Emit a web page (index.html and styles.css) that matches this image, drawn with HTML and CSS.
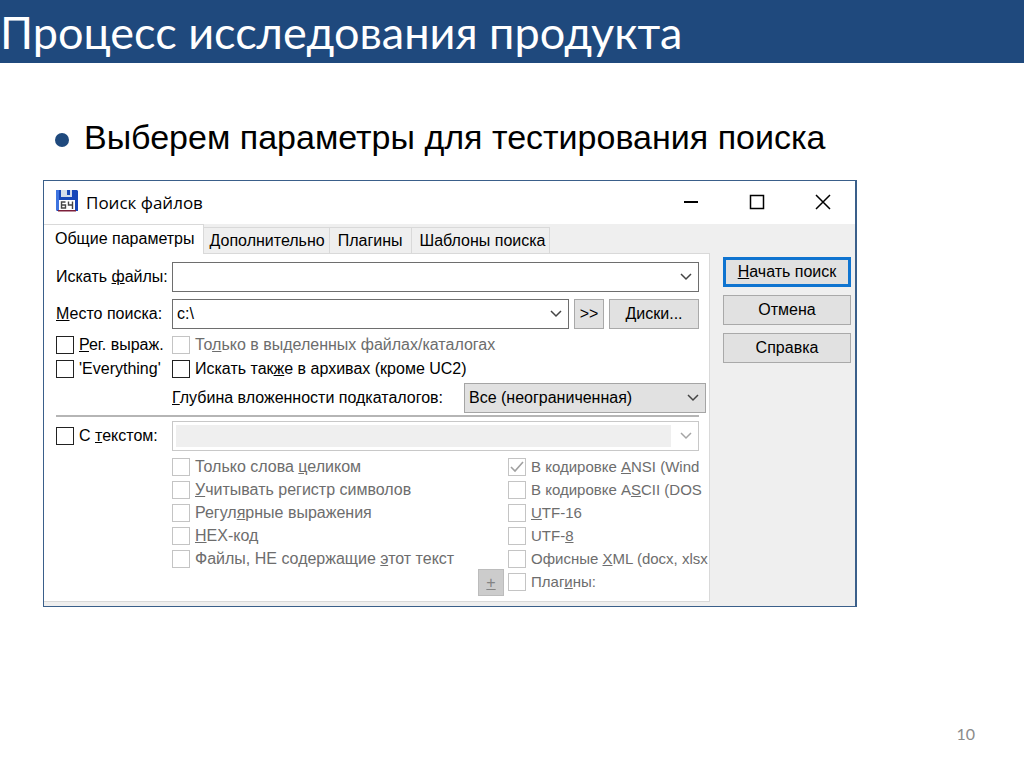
FILE: index.html
```html
<!DOCTYPE html>
<html lang="ru">
<head>
<meta charset="utf-8">
<title>Процесс исследования продукта</title>
<link rel="stylesheet" href="styles.css">
</head>
<body>
<main class="slide">
  <header class="slide-header"><h1>Процесс исследования продукта</h1></header>
  <div class="slide-body">
    <ul class="bullets"><li>Выберем параметры для тестирования поиска</li></ul>

    <section class="window" aria-label="Поиск файлов">
      <div class="titlebar">
        <svg class="app-icon" width="24" height="24" viewBox="0 0 24 24" aria-hidden="true">
          <path fill="#1746b8" d="M1 1h21l1 1v20H2l-1-1z"/>
          <path fill="#3d74e0" d="M1 1h3v20H1z"/>
          <path fill="#d5dcea" d="M6 1h11v7H6z"/>
          <path fill="#1746b8" d="M12 1h3v5h-3z"/>
          <path fill="#fff" d="M4 11h16v10H4z"/>
          <path fill="none" stroke="#444" stroke-width="1.4" d="M10.500 13H6.500v6h4v-3h-4M13.500 12.500V16h4M17.500 12.500V20"/>
          <path fill="#7c1f3a" d="M3 21h18v1.500H3z"/>
        </svg>
        <h2>Поиск файлов</h2>
        <div class="window-controls">
          <button type="button" aria-label="Свернуть"><svg width="16" height="16" viewBox="0 0 16 16"><path d="M1 8h14" stroke-width="2"/></svg></button>
          <button type="button" aria-label="Развернуть"><svg width="16" height="16" viewBox="0 0 16 16"><path d="M1.500 1.500h13v13h-13z" stroke-width="1.500"/></svg></button>
          <button type="button" aria-label="Закрыть"><svg width="16" height="16" viewBox="0 0 16 16"><path d="M1 1l14 14M15 1L1 15" stroke-width="1.500"/></svg></button>
        </div>
      </div>

      <div class="window-body">
        <div class="main">
          <div class="tabs" role="tablist">
            <button type="button" role="tab" class="tab tab-active" aria-selected="true">Общие параметры</button>
            <button type="button" role="tab" class="tab">Дополнительно</button>
            <button type="button" role="tab" class="tab">Плагины</button>
            <button type="button" role="tab" class="tab">Шаблоны поиска</button>
          </div>
          <form class="panel">
            <div class="row">
              <label for="files">Искать <u>ф</u>айлы:</label>
              <div class="combo">
                <select id="files"><option></option></select>
                <svg class="chevron" viewBox="0 0 12 8"><path d="M1 1l5 5 5-5"/></svg>
              </div>
            </div>
            <div class="row">
              <label for="place"><u>М</u>есто поиска:</label>
              <div class="place">
                <div class="combo">
                  <select id="place"><option>c:\</option></select>
                  <svg class="chevron" viewBox="0 0 12 8"><path d="M1 1l5 5 5-5"/></svg>
                </div>
                <button type="button" class="button more">&gt;&gt;</button>
                <button type="button" class="button disks"><u>Д</u>иски...</button>
              </div>
            </div>
            <div class="row options">
              <label class="check"><input type="checkbox"><span><u>Р</u>ег. выраж.</span></label>
              <label class="check disabled"><input type="checkbox" disabled><span>То<u>л</u>ько в выделенных файлах/каталогах</span></label>
              <label class="check"><input type="checkbox"><span>'Everything'</span></label>
              <label class="check"><input type="checkbox"><span>Искать так<u>ж</u>е в архивах (кроме UC2)</span></label>
            </div>
            <div class="depth">
              <label for="depth"><u>Г</u>лубина вложенности подкаталогов:</label>
              <div class="combo combo-grey">
                <select id="depth"><option>Все (неограниченная)</option></select>
                <svg class="chevron" viewBox="0 0 12 8"><path d="M1 1l5 5 5-5"/></svg>
              </div>
            </div>
            <hr>
            <div class="row text-row">
              <label class="check"><input type="checkbox"><span>С <u>т</u>екстом:</span></label>
              <div class="combo combo-off">
                <select aria-label="Текст" disabled><option></option></select>
                <svg class="chevron" viewBox="0 0 12 8"><path d="M1 1l5 5 5-5"/></svg>
              </div>
            </div>
            <div class="text-options">
              <div class="list">
                <label class="check disabled"><input type="checkbox" disabled><span>Только слова <u>ц</u>еликом</span></label>
                <label class="check disabled"><input type="checkbox" disabled><span><u>У</u>читывать регистр символов</span></label>
                <label class="check disabled"><input type="checkbox" disabled><span>Регул<u>я</u>рные выражения</span></label>
                <label class="check disabled"><input type="checkbox" disabled><span><u>H</u>EX-код</span></label>
                <label class="check disabled"><input type="checkbox" disabled><span>Файлы, НЕ содержащие <u>э</u>тот текст</span></label>
              </div>
              <button type="button" class="plus" disabled><u>+</u></button>
              <div class="list encodings">
                <label class="check disabled"><input type="checkbox" checked disabled><span>В кодировке <u>A</u>NSI (Wind</span></label>
                <label class="check disabled"><input type="checkbox" disabled><span>В кодировке A<u>S</u>CII (DOS</span></label>
                <label class="check disabled"><input type="checkbox" disabled><span><u>U</u>TF-16</span></label>
                <label class="check disabled"><input type="checkbox" disabled><span>UTF-<u>8</u></span></label>
                <label class="check disabled"><input type="checkbox" disabled><span>Офисные <u>X</u>ML (docx, xlsx</span></label>
                <label class="check disabled"><input type="checkbox" disabled><span>Плаг<u>и</u>ны:</span></label>
              </div>
            </div>
          </form>
        </div>
        <div class="actions">
          <button type="button" class="button primary"><u>Н</u>ачать поиск</button>
          <button type="button" class="button">Отмена</button>
          <button type="button" class="button">Справка</button>
        </div>
      </div>
    </section>
  </div>
  <footer class="slide-footer">10</footer>
</main>
</body>
</html>
```

FILE: styles.css
```css
* { box-sizing: border-box; }

body {
  margin: 0;
  background: #fff;
  color: #000;
  font-family: "Liberation Sans", Arial, sans-serif;
}

h1, h2, ul { margin: 0; padding: 0; font-weight: 400; }

button, select { font: inherit; color: inherit; }

.slide {
  display: flex;
  flex-direction: column;
  min-height: 100vh;
}

.slide-header {
  background: #1f497d;
  color: #fff;
  height: 63px;
  display: flex;
  align-items: center;
}

.slide-header h1 {
  font: 45px/60px Lato, "Open Sans", sans-serif;
  white-space: nowrap;
}

.slide-body { flex: 1; padding: 54px 167px 0 43px; }

.bullets { list-style: none; }

.bullets li {
  display: flex;
  align-items: center;
  gap: 15px;
  padding-left: 12px;
  font-size: 34px;
  line-height: 40px;
  white-space: nowrap;
}

.bullets li::before {
  content: "";
  width: 14px;
  height: 14px;
  margin-top: 6px;
  border-radius: 50%;
  background: #1f497d;
}

.slide-footer {
  padding: 0 49px 23px;
  text-align: right;
  color: #8b8b8b;
  font: 16px/20px Lato, "Open Sans", sans-serif;
}

/* Window */

.window {
  margin-top: 23px;
  border: 1px solid #3a5f8a;
  border-right-width: 2px;
  background: #efefef;
  font-size: 16px;
  line-height: 18px;
}

.titlebar {
  display: flex;
  align-items: center;
  height: 43px;
  padding: 0 10px 0 11px;
  background: #fff;
}

.app-icon { margin-bottom: 3px; }

.titlebar h2 {
  flex: 1;
  margin-left: 7px;
  font: 17px/24px "Open Sans", sans-serif;
}

.window-controls { display: flex; gap: 22px; padding-bottom: 2px; }

.window-controls button {
  display: grid;
  place-items: center;
  width: 44px;
  height: 30px;
  padding: 0;
  border: 0;
  background: none;
}

.window-controls svg { fill: none; stroke: #000; }

.window-body {
  display: flex;
  gap: 13px;
  padding: 0 4px 4px 0;
}

.main { flex: 1; min-width: 0; }

/* Tabs */

.tabs { display: flex; align-items: flex-end; height: 29px; }

.tab {
  height: 26px;
  padding: 0 4px 0 6px;
  border: 1px solid #d9d9d9;
  border-left: 0;
  border-bottom: 0;
  background: #efefef;
  white-space: nowrap;
}

.tab:nth-child(3) { padding: 0 8px; }
.tab:nth-child(4) { padding: 0 4px 0 8px; }

.tab-active {
  position: relative;
  height: 30px;
  margin-bottom: -1px;
  padding: 0 8px 2px 11px;
  background: #fff;
}

.panel {
  display: flex;
  flex-direction: column;
  border: 1px solid #d9d9d9;
  border-left: 0;
  background: #fff;
  padding: 8px 0 5px 12px;
}

.row {
  display: grid;
  grid-template-columns: 116px 1fr;
  align-items: center;
  margin-right: 10px;
  margin-bottom: 7px;
  white-space: nowrap;
}

.place { display: flex; gap: 5px; }
.place .combo { flex: 1; }

/* Combo boxes */

.combo { display: grid; align-items: center; height: 30px; border: 1px solid #6e6e6e; background: #fff; }

.combo > * { grid-area: 1 / 1; }

.combo select {
  appearance: none;
  width: 100%;
  height: 28px;
  padding: 0 28px 0 4px;
  border: 0;
  background: none;
}

.chevron {
  justify-self: end;
  width: 12px;
  height: 8px;
  margin-right: 6px;
  fill: none;
  stroke: #444;
  stroke-width: 1.5px;
  pointer-events: none;
}

.combo-grey { border-color: #a5a5a5; background: #e1e1e1; }

.combo-off { border-color: #c8c8c8; }
.combo-off select { width: auto; height: 22px; margin: 0 27px 0 3px; background: #efefef; opacity: 1; }
.combo-off .chevron { stroke: #a5a5a5; }

/* Buttons */

.button {
  height: 30px;
  padding: 0;
  border: 1px solid #a9a9a9;
  background: #e1e1e1;
}

.more { width: 30px; }
.disks { width: 90px; }

.actions {
  display: flex;
  flex-direction: column;
  gap: 8px;
  width: 128px;
  padding-top: 33px;
}

.actions .primary { border: 3px solid #0f74d0; }

/* Check boxes */

.check {
  display: flex;
  align-items: center;
  gap: 5px;
  height: 18px;
  white-space: nowrap;
}

.check input {
  appearance: none;
  flex: none;
  width: 18px;
  height: 18px;
  margin: 0;
  border: 1px solid #222;
  background: #fff;
}

.check.disabled { color: #6d6d6d; }
.check.disabled input { border-color: #c4c4c4; }

.check input:checked {
  background: no-repeat center / 16px 16px url("data:image/svg+xml,%3Csvg xmlns='http://www.w3.org/2000/svg' viewBox='0 0 16 16'%3E%3Cpath fill='none' stroke='%23a0a0a0' stroke-width='1.6' d='M2 8l4 4 8-9'/%3E%3C/svg%3E");
}

.options { row-gap: 6px; margin-bottom: 5px; }

.depth {
  display: grid;
  grid-template-columns: 1fr 242px;
  align-items: center;
  padding: 0 3px 0 116px;
  white-space: nowrap;
}

.depth label { width: 0; }

hr { width: auto; margin: 2px 10px 4px 0; border: 0; border-top: 2px solid #b5b5b5; }

.text-row { margin-bottom: 7px; }

.text-options {
  display: grid;
  grid-template-columns: 1fr 26px 200px;
  column-gap: 4px;
  padding: 0 1px 0 116px;
}

.list { display: flex; flex-direction: column; gap: 5px; min-width: 0; overflow: hidden; }

.encodings { padding-bottom: 5px; font-size: 15px; }

.plus {
  align-self: end;
  height: 27px;
  padding: 0;
  border: 1px solid #bcbcbc;
  background: #ccc;
  color: #838383;
}
```
